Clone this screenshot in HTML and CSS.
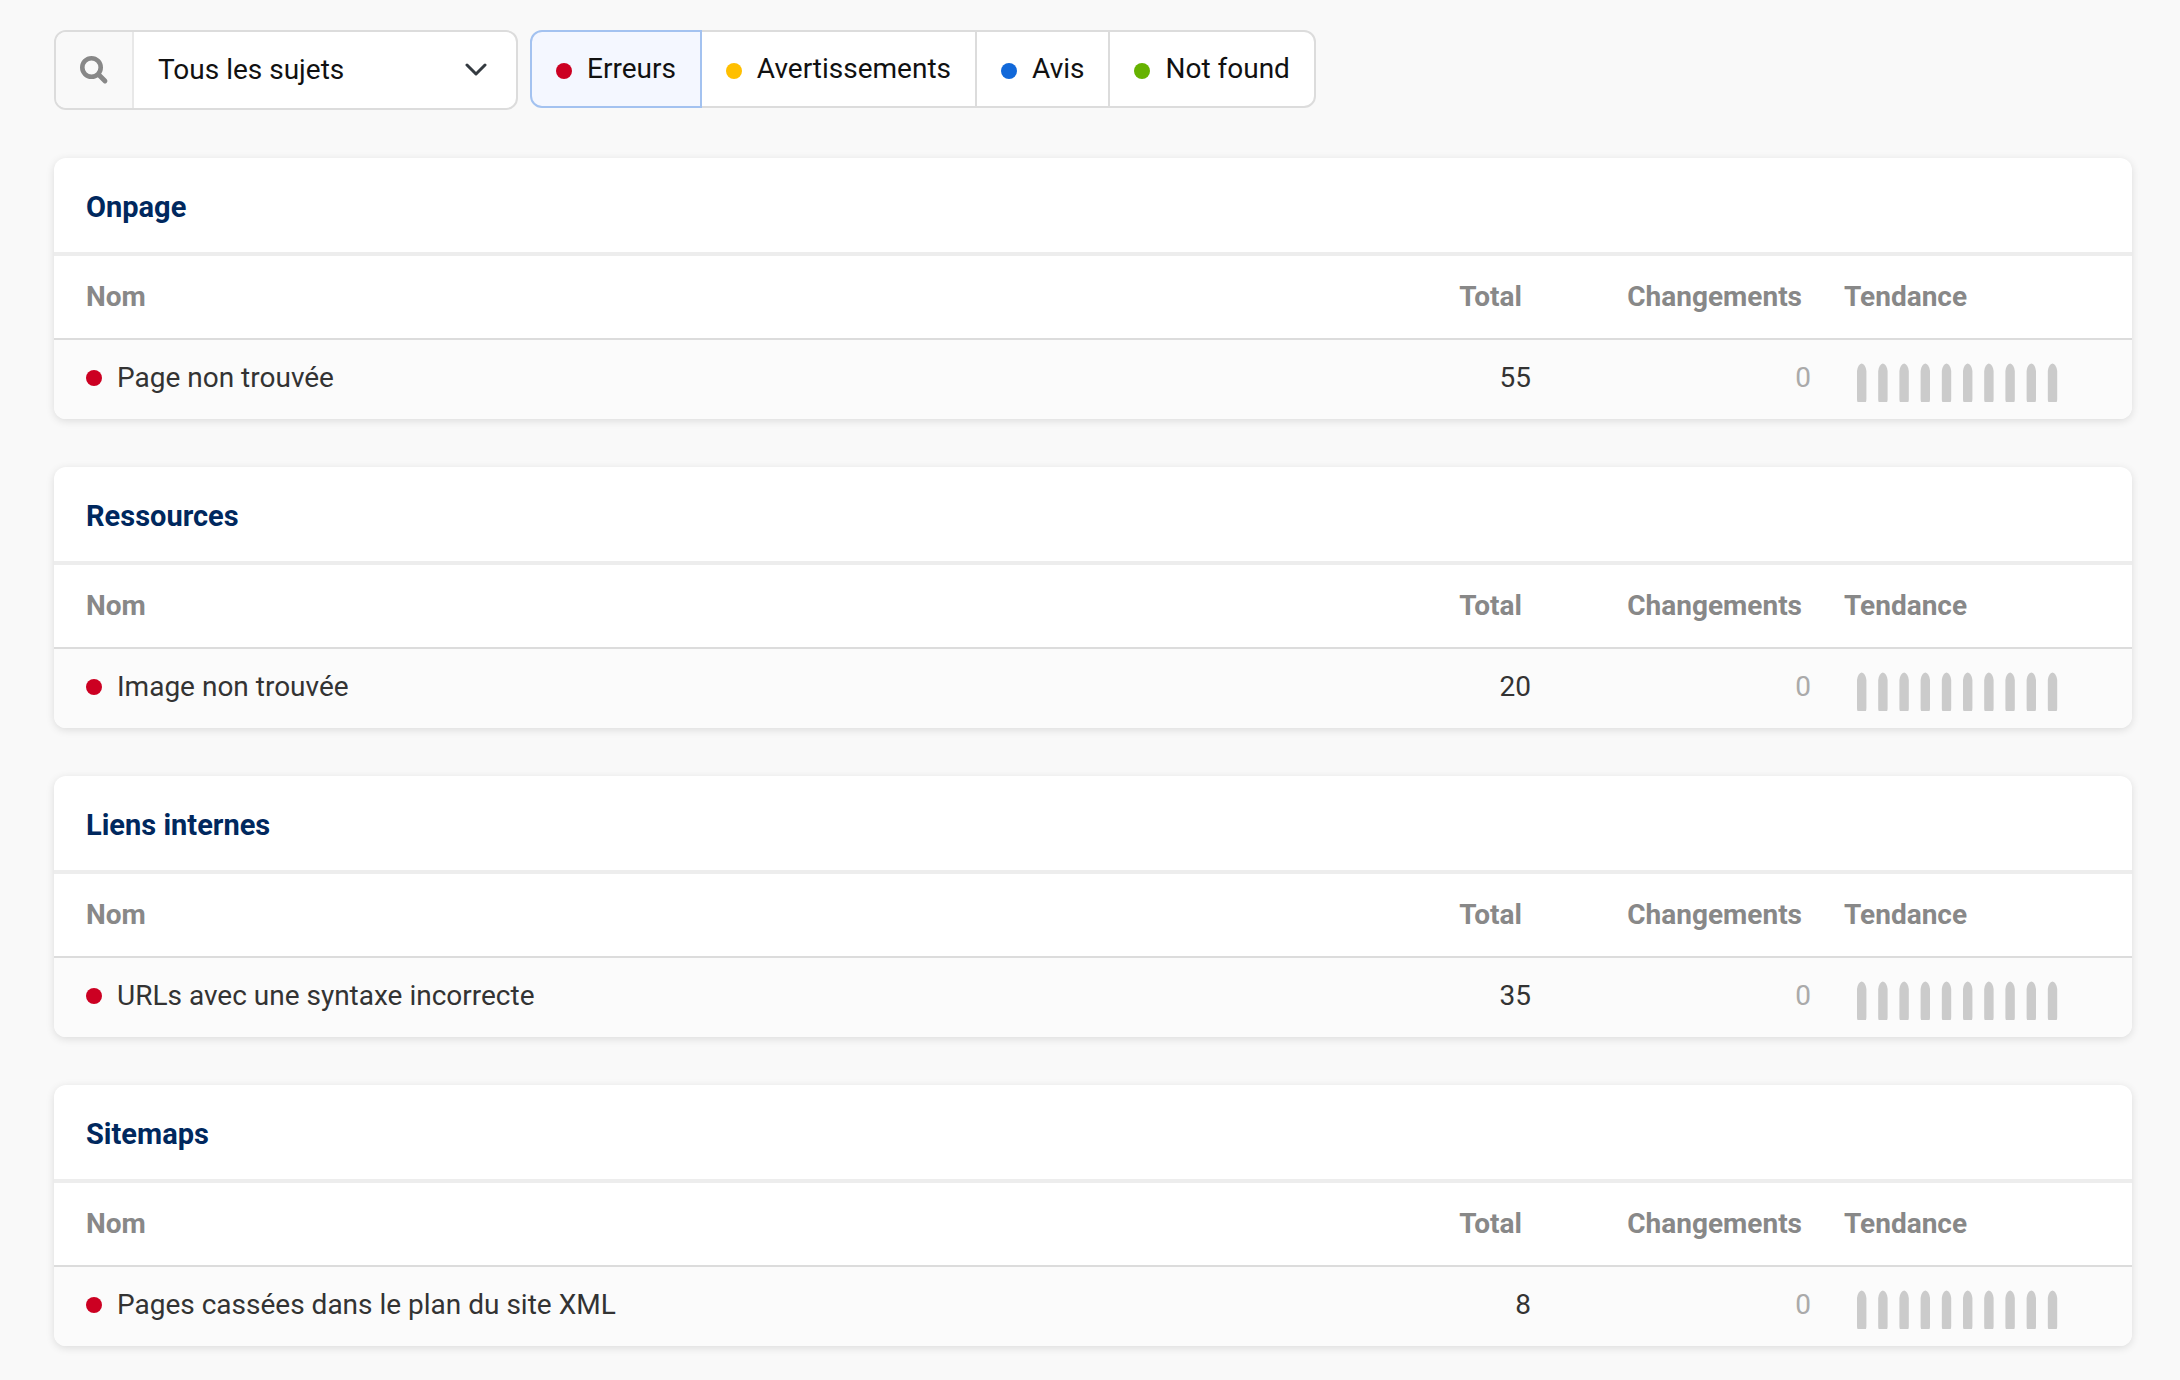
FILE: index.html
```html
<!DOCTYPE html>
<html lang="fr">
<head>
<meta charset="utf-8">
<meta name="viewport" content="width=device-width, initial-scale=1">
<title>Erreurs</title>
<link rel="stylesheet" href="styles.css">
</head>
<body>
<svg class="sprite" aria-hidden="true">
  <symbol id="trend" viewBox="0 0 201 39">
    <g fill="#cbcbcb">
      <path id="bar" d="M0.500 39Q0 38 0 36V8Q1 1 4.700 0.500Q8.400 1 9.400 8V36Q9.400 38 8.900 39Z"/>
      <use href="#bar" x="21.200"/>
      <use href="#bar" x="42.400"/>
      <use href="#bar" x="63.600"/>
      <use href="#bar" x="84.800"/>
      <use href="#bar" x="106"/>
      <use href="#bar" x="127.200"/>
      <use href="#bar" x="148.400"/>
      <use href="#bar" x="169.600"/>
      <use href="#bar" x="190.800"/>
    </g>
  </symbol>
</svg>
<main class="page">
  <form class="filters">
    <div class="topic">
      <label class="topic-icon" for="topic" aria-label="Sujet">
        <svg width="30" height="30" viewBox="0 0 30 30" fill="none" stroke="#888" stroke-linecap="round">
          <circle cx="12.500" cy="12.500" r="9.200" stroke-width="4.600"/>
          <path d="M20 20L26 26" stroke-width="4.800"/>
        </svg>
      </label>
      <div class="select-wrap">
        <select id="topic" class="select">
          <option>Tous les sujets</option>
        </select>
        <svg class="chevron" width="22" height="14" viewBox="0 0 22 14" fill="none" stroke="#343a40" stroke-width="3" stroke-linecap="round" stroke-linejoin="round"><path d="M2 2L11 11L20 2"/></svg>
      </div>
    </div>
    <div class="levels">
      <button type="button" class="level active" aria-pressed="true"><span class="dot red"></span>Erreurs</button>
      <button type="button" class="level" aria-pressed="false"><span class="dot yellow"></span>Avertissements</button>
      <button type="button" class="level" aria-pressed="false"><span class="dot blue"></span>Avis</button>
      <button type="button" class="level" aria-pressed="false"><span class="dot green"></span>Not found</button>
    </div>
  </form>

  <section class="card">
    <h2 class="card-title">Onpage</h2>
    <table class="issues">
      <thead><tr><th>Nom</th><th class="total">Total</th><th class="changes">Changements</th><th class="trend">Tendance</th></tr></thead>
      <tbody><tr><td><span class="dot red"></span>Page non trouvée</td><td class="total">55</td><td class="changes">0</td><td class="trend"><svg class="bars"><use href="#trend"/></svg></td></tr></tbody>
    </table>
  </section>

  <section class="card">
    <h2 class="card-title">Ressources</h2>
    <table class="issues">
      <thead><tr><th>Nom</th><th class="total">Total</th><th class="changes">Changements</th><th class="trend">Tendance</th></tr></thead>
      <tbody><tr><td><span class="dot red"></span>Image non trouvée</td><td class="total">20</td><td class="changes">0</td><td class="trend"><svg class="bars"><use href="#trend"/></svg></td></tr></tbody>
    </table>
  </section>

  <section class="card">
    <h2 class="card-title">Liens internes</h2>
    <table class="issues">
      <thead><tr><th>Nom</th><th class="total">Total</th><th class="changes">Changements</th><th class="trend">Tendance</th></tr></thead>
      <tbody><tr><td><span class="dot red"></span>URLs avec une syntaxe incorrecte</td><td class="total">35</td><td class="changes">0</td><td class="trend"><svg class="bars"><use href="#trend"/></svg></td></tr></tbody>
    </table>
  </section>

  <section class="card">
    <h2 class="card-title">Sitemaps</h2>
    <table class="issues">
      <thead><tr><th>Nom</th><th class="total">Total</th><th class="changes">Changements</th><th class="trend">Tendance</th></tr></thead>
      <tbody><tr><td><span class="dot red"></span>Pages cassées dans le plan du site XML</td><td class="total">8</td><td class="changes">0</td><td class="trend"><svg class="bars"><use href="#trend"/></svg></td></tr></tbody>
    </table>
  </section>
</main>
</body>
</html>
```
FILE: styles.css
```css
* {
  box-sizing: border-box;
}

body {
  margin: 0;
  background: #f9f9f9;
  color: #333;
  font-family: Roboto, "Liberation Sans", sans-serif;
  font-size: 28px;
  line-height: 36px;
}

.sprite {
  position: absolute;
  width: 0;
  height: 0;
}

.page {
  display: flex;
  flex-direction: column;
  gap: 48px;
  padding: 30px 48px 32px 54px;
}

/* Filter bar */
.filters {
  display: flex;
  flex-wrap: wrap;
  align-items: flex-start;
  gap: 12px;
}

.topic {
  display: flex;
  width: 464px;
  height: 80px;
  border: 2px solid #dcdcdc;
  border-radius: 12px;
  background: #fff;
  overflow: hidden;
}

.topic-icon {
  display: flex;
  align-items: center;
  justify-content: center;
  width: 78px;
  border-right: 2px solid #e8e8e8;
  background: #f9f9f9;
}

.select-wrap {
  display: grid;
  flex: 1;
  align-items: center;
}

.select,
.chevron {
  grid-area: 1 / 1;
}

.select {
  width: 100%;
  height: 100%;
  padding: 0 60px 0 24px;
  border: 0;
  appearance: none;
  background: transparent;
  color: #111;
  font: inherit;
}

.chevron {
  justify-self: end;
  margin-right: 29px;
  pointer-events: none;
}

.levels {
  display: flex;
}

.level {
  display: flex;
  align-items: center;
  height: 78px;
  margin: 0 0 0 -2px;
  padding: 0 24px;
  border: 2px solid #dcdcdc;
  background: #fff;
  color: #111;
  font: inherit;
}

.level:first-child {
  margin-left: 0;
  border-radius: 12px 0 0 12px;
}

.level:last-child {
  border-radius: 0 12px 12px 0;
}

.level.active {
  z-index: 1;
  border-color: #a3c2f0;
  background: #f4f7ff;
}

.dot {
  display: inline-block;
  width: 16px;
  height: 16px;
  margin-right: 15px;
  border-radius: 50%;
}

.level .dot {
  margin-top: 4px;
}

.red {
  background: #cc0022;
}

.yellow {
  background: #ffbf00;
}

.blue {
  background: #1168d9;
}

.green {
  background: #66b200;
}

/* Issue cards */
.card {
  border-radius: 12px;
  background: #fff;
  box-shadow: 0 2px 8px rgba(0, 0, 0, 0.12);
  overflow: hidden;
}

.card-title {
  margin: 0;
  padding: 31px 32px 27px;
  border-bottom: 4px solid #ededed;
  color: #00285e;
  font-size: 29px;
  font-weight: 700;
}

.issues {
  width: 100%;
  border-spacing: 0;
  table-layout: fixed;
}

.issues th,
.issues td {
  padding: 0 15px 0 32px;
  text-align: left;
}

.issues th {
  height: 84px;
  border-bottom: 2px solid #dcdcdc;
  color: #888;
  font-weight: 700;
}

.issues td {
  height: 79px;
  padding-bottom: 4px;
  background: #fbfbfb;
}

.issues td .dot {
  vertical-align: 1px;
}

.issues .total {
  width: 240px;
  text-align: right;
}

.issues .changes {
  width: 280px;
  text-align: right;
}

.issues th.total,
.issues th.changes {
  padding-right: 24px;
}

.issues td.changes {
  color: #aaa;
}

.issues .trend {
  width: 306px;
  padding-left: 18px;
}

.issues td.trend {
  padding: 5px 0 0 31px;
}

.bars {
  display: block;
  width: 201px;
  height: 39px;
}
```
